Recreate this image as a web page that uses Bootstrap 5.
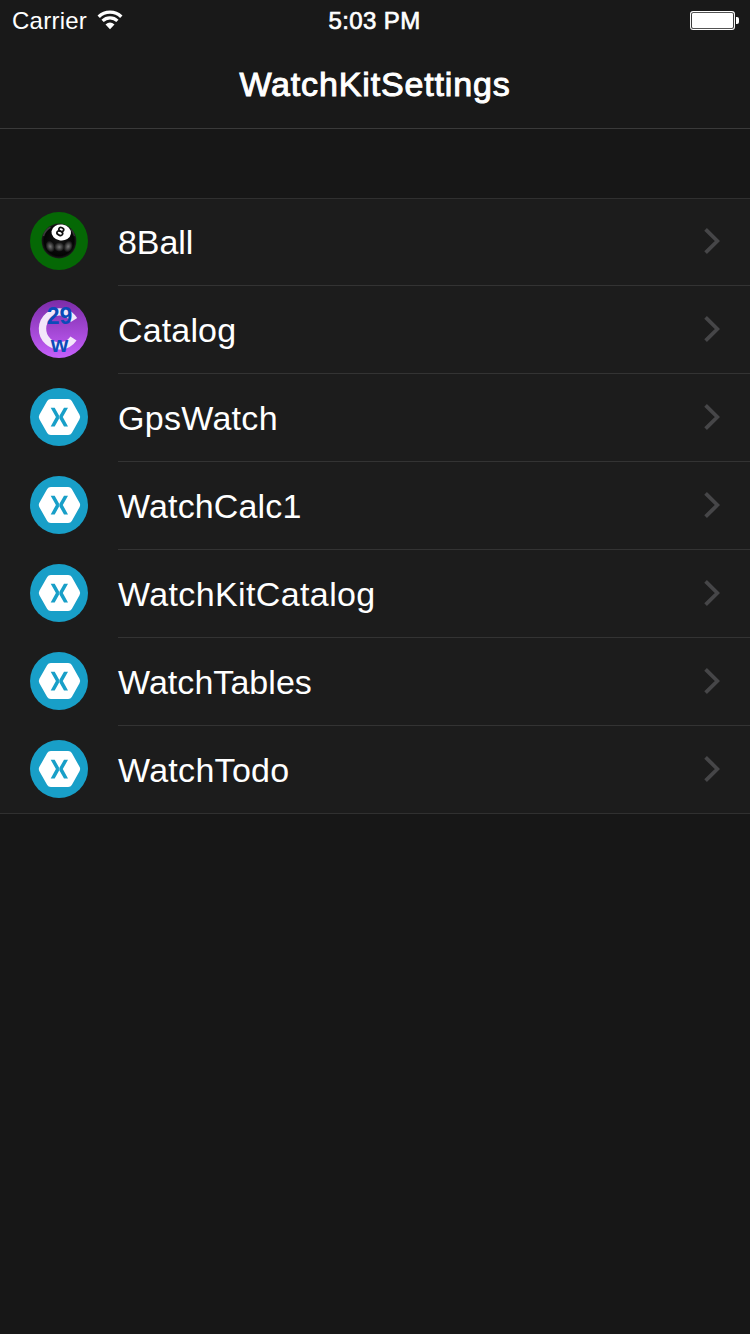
<!DOCTYPE html>
<html lang="en">
<head>
<meta charset="utf-8">
<meta name="viewport" content="width=device-width, initial-scale=1">
<title>WatchKitSettings</title>
<link href="https://cdn.jsdelivr.net/npm/bootstrap@5.3.0/dist/css/bootstrap.min.css" rel="stylesheet">
<style>
  body { background: #171717; color: #fff; font-family: "Liberation Sans", Arial, sans-serif; min-height: 1334px; }
  .top-area { background: #191919; height: 129px; border-bottom: 1px solid #3a3a3a; }
  .status-bar { height: 40px; padding: 1px 11px 0 12px; font-size: 24px; line-height: 40px; }
  .status-side { flex: 1 1 0; }
  .carrier { letter-spacing: .25px; }
  .clock { letter-spacing: .4px; margin-left: -2px; -webkit-text-stroke: .7px #fff; }
  .wifi { margin-left: 10px; margin-bottom: 1px; }
  .screen-title { font-size: 34px; line-height: 88px; font-weight: 400; letter-spacing: .85px; -webkit-text-stroke: 1px #fff; }
  .app-list { margin-top: 69px; background: #1c1c1c; border-top: 1px solid #303030; border-bottom: 1px solid #303030; }
  .app-row { height: 88px; padding-left: 30px; color: #fff; }
  .app-row:first-child { height: 87px; }
  .app-row:last-child { height: 87px; }
  .app-icon { width: 58px; height: 58px; margin: 13px 30px 0 0; }
  .app-row:not(:first-child) .app-icon { margin-top: 14px; }
  .app-body { font-size: 34px; line-height: 88px; padding-right: 30px; letter-spacing: .15px; }
  .app-row:first-child .app-body { line-height: 86px; letter-spacing: -.1px; }
  .app-row:nth-child(3) .app-body { letter-spacing: .3px; }
  .app-row:nth-child(5) .app-body { letter-spacing: .38px; }
  .app-row:nth-child(6) .app-body { letter-spacing: .05px; }
  .app-row:nth-child(7) .app-body { letter-spacing: .3px; }
  .app-row:not(:last-child) .app-body { border-bottom: 1px solid #333; }
  .chevron { margin-bottom: 2px; }
</style>
</head>
<body>
<svg width="0" height="0" class="d-none">
  <symbol id="chevron" viewBox="0 0 16 26"><path d="M1.6 1.4 13.4 13 1.6 24.6" fill="none" stroke="#464648" stroke-width="3.8"/></symbol>
  <symbol id="hexagon" viewBox="0 0 58 58">
    <circle cx="29" cy="29" r="29" fill="#189fc8"/>
    <path d="M20.8 11H38.2Q40.6 11 41.8 13L49.5 26.8Q50.8 29 49.5 31.2L41.8 45Q40.6 47 38.2 47H20.8Q18.4 47 17.2 45L9.4 31.2Q8.2 29 9.4 26.8L17.2 13Q18.4 11 20.8 11Z" fill="#fff"/>
    <path d="M20.700 19.800H24.700L29.300 28 34 19.800H38L32.800 29 38 38.400H34L29.300 30.200 24.700 38.400H20.700L25.900 29Z" fill="#189fc8"/>
    <path d="M29.300 27.500v3.200" stroke="#fff" stroke-opacity=".6" stroke-width=".6"/>
  </symbol>
</svg>

<header class="top-area">
  <div class="status-bar d-flex align-items-center">
    <div class="status-side d-flex align-items-center">
      <span class="carrier">Carrier</span>
      <svg class="wifi" width="26" height="20" viewBox="0 0 26 20" fill="none" stroke="#fff">
        <path d="M1.7 6.7C8 .6 18 .6 24.3 6.7" stroke-width="3.4"/>
        <path d="M5.6 10.9C9.7 6.9 16.3 6.9 20.4 10.9" stroke-width="3.2"/>
        <path d="M8.5 14.500Q13 10.700 17.5 14.500L13 19.200Z" fill="#fff" stroke="none"/>
      </svg>
    </div>
    <span class="clock">5:03 PM</span>
    <div class="status-side d-flex align-items-center justify-content-end">
      <svg width="49" height="19" viewBox="0 0 49 19">
        <rect x=".6" y=".6" width="43.8" height="17.8" rx="2.5" fill="none" stroke="#fff" stroke-width="1.1"/>
        <rect x="2" y="2" width="41" height="15" rx="1.2" fill="#fff"/>
        <path d="M46 6h1q2 0 2 2v3q0 2-2 2h-1z" fill="#fff"/>
      </svg>
    </div>
  </div>
  <h1 class="screen-title text-center m-0">WatchKitSettings</h1>
</header>

<main class="app-list">
  <a href="#" class="app-row d-flex text-decoration-none">
    <svg class="app-icon flex-shrink-0" viewBox="0 0 58 58">
      <defs>
        <radialGradient id="ball"><stop offset="0" stop-color="#141414"/><stop offset=".85" stop-color="#040404"/><stop offset="1" stop-color="#1c1c1c"/></radialGradient>
        <radialGradient id="glow"><stop offset="0" stop-color="#777"/><stop offset="1" stop-color="#777" stop-opacity="0"/></radialGradient>
      </defs>
      <circle cx="29" cy="29" r="29" fill="#056805"/>
      <circle cx="29" cy="29" r="17.4" fill="url(#ball)"/>
      <path d="M20.5 15.2Q15 18.5 13.5 24" stroke="#3c3c3c" stroke-width="1.5" fill="none"/>
      <path d="M40.5 17Q43.5 19.5 44.5 24" stroke="#333" stroke-width="1.3" fill="none"/>
      <ellipse cx="20.2" cy="34.5" rx="4.5" ry="6" fill="url(#glow)" transform="rotate(-20 20.2 34.5)"/>
      <ellipse cx="29.3" cy="35" rx="5.2" ry="4.8" fill="url(#glow)"/>
      <ellipse cx="38.2" cy="34.5" rx="4.5" ry="6" fill="url(#glow)" transform="rotate(20 38.2 34.5)"/>
      <ellipse cx="31.2" cy="20.5" rx="9.8" ry="8" fill="#fff" transform="rotate(8 31.2 20.5)"/>
      <g fill="none" stroke="#111" stroke-width="1.7" transform="rotate(22 30.5 19.4)"><ellipse cx="30.5" cy="17.3" rx="2.5" ry="1.9"/><ellipse cx="30.5" cy="21.3" rx="3" ry="2.1"/></g>
    </svg>
    <div class="app-body d-flex flex-grow-1 align-items-center justify-content-between"><span>8Ball</span><svg class="chevron" width="16" height="26"><use href="#chevron"/></svg></div>
  </a>
  <a href="#" class="app-row d-flex text-decoration-none">
    <svg class="app-icon flex-shrink-0" viewBox="0 0 58 58">
      <defs><linearGradient id="violet" x1="0" x2="0" y1="0" y2="1"><stop offset="0" stop-color="#7b2ca8"/><stop offset="1" stop-color="#c660fb"/></linearGradient></defs>
      <circle cx="29" cy="29" r="29" fill="url(#violet)"/>
      <path d="M44 20A17 17 0 1 0 43.5 38.5" fill="none" stroke="#f3e6fa" stroke-width="7.4"/>
      <g fill="#0b4bb8" font-family="Liberation Sans" font-weight="700" text-anchor="middle"><text x="29.5" y="24" font-size="23">29</text><text x="29.5" y="51.7" font-size="22.5">w</text></g>
    </svg>
    <div class="app-body d-flex flex-grow-1 align-items-center justify-content-between"><span>Catalog</span><svg class="chevron" width="16" height="26"><use href="#chevron"/></svg></div>
  </a>
  <a href="#" class="app-row d-flex text-decoration-none">
    <svg class="app-icon flex-shrink-0"><use href="#hexagon"/></svg>
    <div class="app-body d-flex flex-grow-1 align-items-center justify-content-between"><span>GpsWatch</span><svg class="chevron" width="16" height="26"><use href="#chevron"/></svg></div>
  </a>
  <a href="#" class="app-row d-flex text-decoration-none">
    <svg class="app-icon flex-shrink-0"><use href="#hexagon"/></svg>
    <div class="app-body d-flex flex-grow-1 align-items-center justify-content-between"><span>WatchCalc1</span><svg class="chevron" width="16" height="26"><use href="#chevron"/></svg></div>
  </a>
  <a href="#" class="app-row d-flex text-decoration-none">
    <svg class="app-icon flex-shrink-0"><use href="#hexagon"/></svg>
    <div class="app-body d-flex flex-grow-1 align-items-center justify-content-between"><span>WatchKitCatalog</span><svg class="chevron" width="16" height="26"><use href="#chevron"/></svg></div>
  </a>
  <a href="#" class="app-row d-flex text-decoration-none">
    <svg class="app-icon flex-shrink-0"><use href="#hexagon"/></svg>
    <div class="app-body d-flex flex-grow-1 align-items-center justify-content-between"><span>WatchTables</span><svg class="chevron" width="16" height="26"><use href="#chevron"/></svg></div>
  </a>
  <a href="#" class="app-row d-flex text-decoration-none">
    <svg class="app-icon flex-shrink-0"><use href="#hexagon"/></svg>
    <div class="app-body d-flex flex-grow-1 align-items-center justify-content-between"><span>WatchTodo</span><svg class="chevron" width="16" height="26"><use href="#chevron"/></svg></div>
  </a>
</main>
<script src="https://cdn.jsdelivr.net/npm/bootstrap@5.3.0/dist/js/bootstrap.bundle.min.js"></script>
</body>
</html>
